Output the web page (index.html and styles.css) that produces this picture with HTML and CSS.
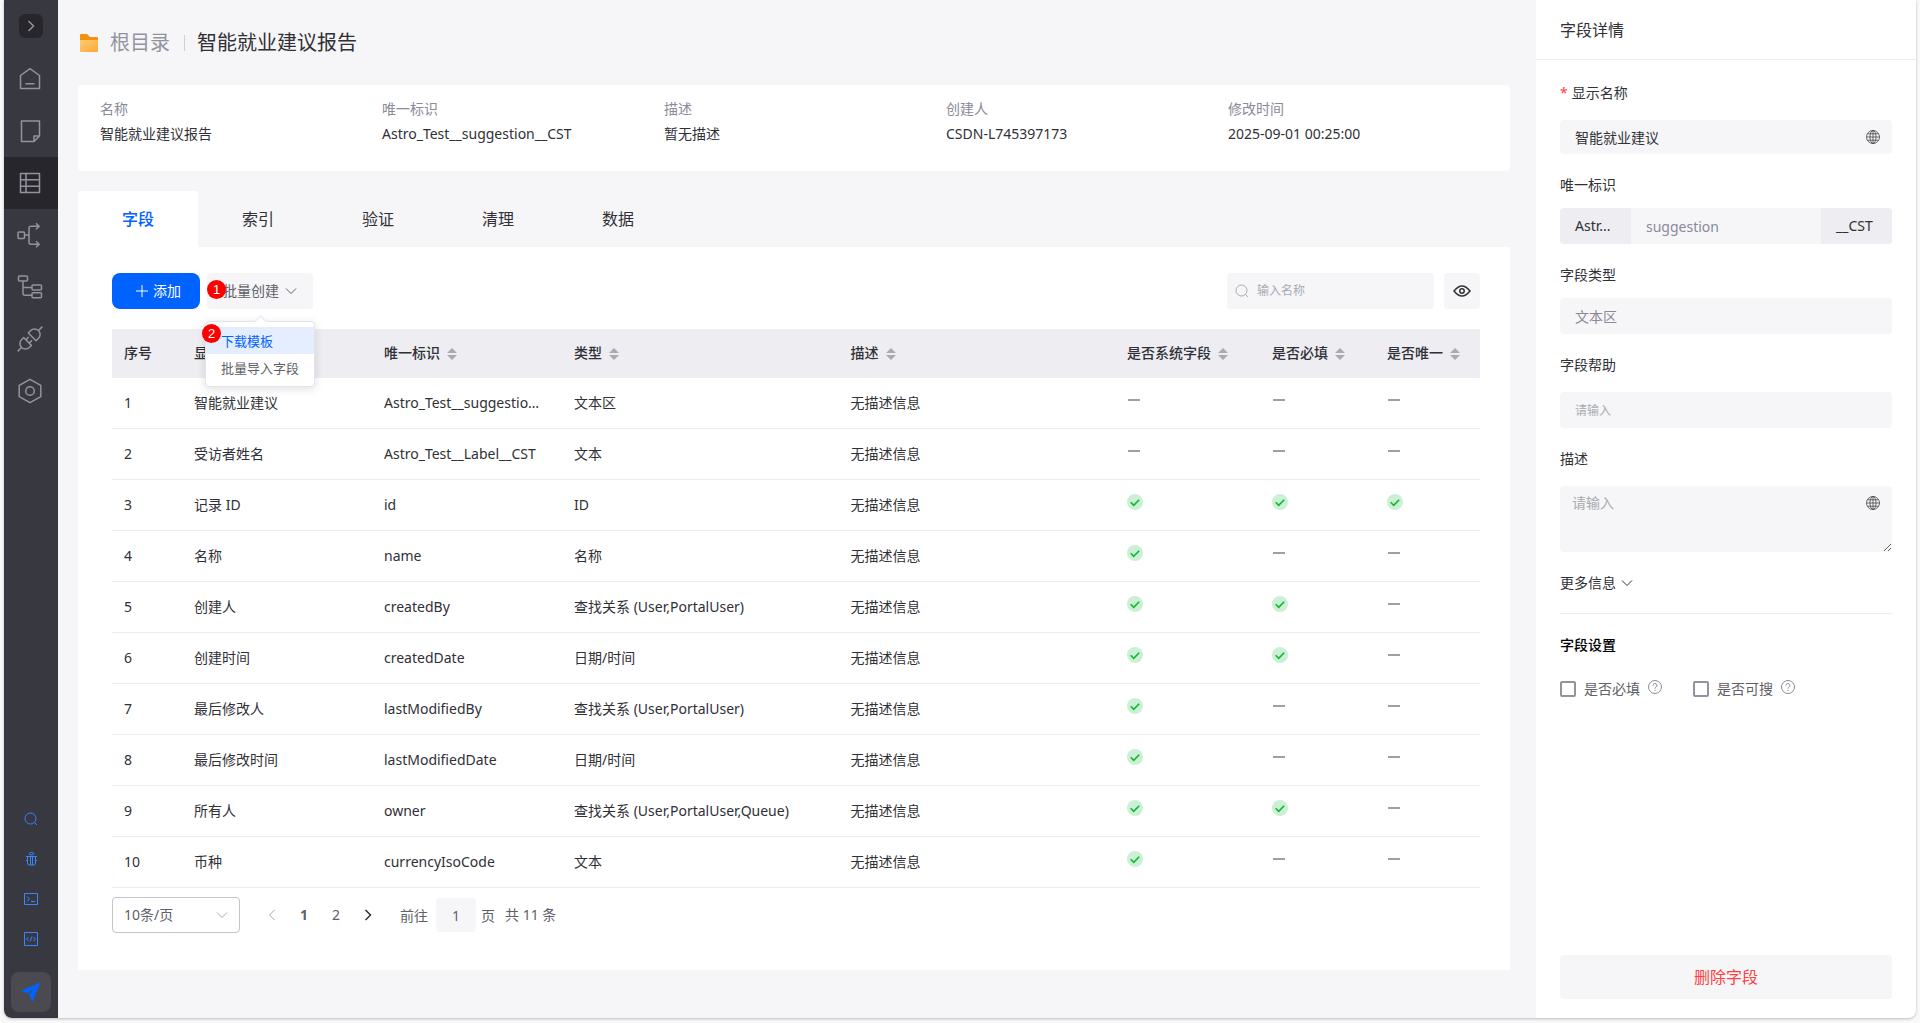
FILE: index.html
```
<!DOCTYPE html>
<html lang="zh-CN">
<head>
<meta charset="UTF-8" />
<meta name="viewport" content="width=device-width, initial-scale=1" />
<title>智能就业建议报告</title>
<link rel="stylesheet" href="styles.css">
</head>
<body>

<!-- Shared icons -->
<svg class="sprite" aria-hidden="true">
  <symbol id="chevron-down" viewBox="0 0 12 12"><path d="M1 3.5l5 5 5-5" /></symbol>
  <symbol id="chevron-left" viewBox="0 0 12 12"><path d="M8.5 1l-5 5 5 5" /></symbol>
  <symbol id="chevron-right" viewBox="0 0 12 12"><path d="M3.5 1l5 5-5 5" /></symbol>
  <symbol id="search" viewBox="0 0 14 14"><circle cx="6.5" cy="6.5" r="5.5" /><path d="M10.5 10.5l2.5 2.5" /></symbol>
  <symbol id="globe" viewBox="0 0 14 14">
    <circle cx="7" cy="7" r="6.5" /><ellipse cx="7" cy="7" rx="3" ry="6.5" />
    <path d="M7 .5v13M.5 7h13M1.5 3.8h11M1.5 10.2h11" />
  </symbol>
  <symbol id="help" viewBox="0 0 14 14">
    <circle cx="7" cy="7" r="6.5" />
    <path d="M5 5.6a2 2 0 1 1 3 1.6q-1 .6-1 1.4M7 9.8v1.2" />
  </symbol>
  <symbol id="check" viewBox="0 0 16 16"><circle cx="8" cy="8" r="8" fill="#cbf0d5" stroke="none" /><path d="M3.7 8.3l3 3 5.5-5.6" stroke="#0fb82e" stroke-width="1.6" /></symbol>
  <symbol id="sort" viewBox="0 0 10 12"><path d="M5 0l5 5H0zM5 12l5-5H0z" /></symbol>
</svg>

<div class="app">

  <aside class="sidebar">
    <button class="toggle" aria-label="展开"><svg class="icon" width="12" height="12"><use href="#chevron-right" /></svg></button>
    <nav class="side-nav">
      <a href="#home" aria-label="首页"><svg class="icon" width="26" height="26" viewBox="0 0 26 26"><path d="M3.5 9.5L13 2.7l9.5 6.8v13h-19zM8.5 17.7h9" /></svg></a>
      <a href="#page" aria-label="页面"><svg class="icon" width="26" height="26" viewBox="0 0 26 26"><path d="M4.5 3h18v15L17 23.5H4.5zM17 23.5V18h5.5" /></svg></a>
      <a href="#data" class="active" aria-label="数据"><svg class="icon" width="26" height="26" viewBox="0 0 26 26"><path d="M3.5 3.5h19v19h-19zM9 3.5v19M3.5 9.8h19M3.5 16.2h19" /></svg></a>
      <a href="#flow" aria-label="流程"><svg class="icon" width="26" height="26" viewBox="0 0 26 26"><rect x="1" y="10" width="6.5" height="6.5" rx="1" /><path d="M7.500 13H12M22 4.200h-8q-2 0-2 2v14q0 2 2 2h8M19 1.200l3.200 3-3.200 3M19 19.200l3.200 3-3.200 3" /></svg></a>
      <a href="#tree" aria-label="结构"><svg class="icon" width="26" height="26" viewBox="0 0 26 26"><rect x="1.500" y="2" width="9" height="5" rx="1" /><rect x="15" y="11" width="9.500" height="5" rx="1" /><rect x="15" y="18.700" width="9.500" height="5" rx="1" /><path d="M6 7v12.200q0 2 2 2h7M6 13.500h9" /></svg></a>
      <a href="#link" aria-label="连接"><svg class="icon" width="26" height="26" viewBox="0 0 26 26"><g transform="rotate(-45 13 13)"><path d="M-4.500 13H1M9.500 7.500H6.500a5.500 5.500 0 0 0 0 11h3zM9.500 10.700h4M9.500 15.300h4M16 7.500h3.500a5.500 5.500 0 0 1 0 11H16zM25 13h5.500" /></g></svg></a>
      <a href="#setting" aria-label="设置"><svg class="icon" width="26" height="26" viewBox="0 0 26 26"><path d="M13 1.300l10.800 6v11.400L13 24.700l-10.800-6V7.300z" /><circle cx="13" cy="13" r="4.300" /></svg></a>
    </nav>
    <div class="side-tools">
      <a href="#find" aria-label="搜索"><svg class="icon" width="14" height="14"><use href="#search" /></svg></a>
      <a href="#debug" aria-label="调试"><svg class="icon" width="14" height="14" viewBox="0 0 14 14"><ellipse cx="7.500" cy="1.700" rx="2.300" ry="1.200" /><path d="M2 4.500h11M3.500 4.500v6.500q0 2 2 2h4q2 0 2-2V4.500M6.500 4.500V13M8.500 4.500V13M2 8.500h1.500M11.500 8.500H13" /></svg></a>
      <a href="#console" aria-label="控制台"><svg class="icon" width="14" height="14" viewBox="0 0 14 14"><path d="M.5 1.500h13v11H.5zM3 4.500L5.500 7 3 9.500M7 9.500h4" /></svg></a>
      <a href="#code" aria-label="代码"><svg class="icon" width="14" height="14" viewBox="0 0 14 14"><path d="M.5.5h13v13H.5zM4.500 5l-2 2 2 2M9.500 5l2 2-2 2M8 4.500l-2 5" /></svg></a>
    </div>
    <button class="send" aria-label="发送"><svg width="20" height="20" viewBox="0 0 20 20"><path d="M19.500.5L.8 8.300q-.6.400 0 .8l6 2.500 6-5-4.700 6.500 2.800 6q.5.800 1 0z" fill="#0062ff" /></svg></button>
  </aside>

  <main class="main">
    <div class="breadcrumb">
      <svg width="18" height="18" viewBox="0 0 18 18">
        <defs><linearGradient id="folder" x1="0" y1="0" x2="1" y2="1"><stop offset="0" stop-color="#ffcb78" /><stop offset="1" stop-color="#fdaa33" /></linearGradient></defs>
        <path d="M1 0h6l3 3h7q1 0 1 1v4H0V1q0-1 1-1z" fill="#f5900c" />
        <path d="M0 6h18v11q0 1-1 1H1q-1 0-1-1z" fill="url(#folder)" />
      </svg>
      <a href="#root">根目录</a>
      <h1>智能就业建议报告</h1>
    </div>

    <dl class="info-card">
      <div><dt>名称</dt><dd>智能就业建议报告</dd></div>
      <div><dt>唯一标识</dt><dd>Astro_Test__suggestion__CST</dd></div>
      <div><dt>描述</dt><dd>暂无描述</dd></div>
      <div><dt>创建人</dt><dd>CSDN-L745397173</dd></div>
      <div><dt>修改时间</dt><dd>2025-09-01 00:25:00</dd></div>
    </dl>

    <div class="tabs">
      <button class="tab active">字段</button>
      <button class="tab">索引</button>
      <button class="tab">验证</button>
      <button class="tab">清理</button>
      <button class="tab">数据</button>
    </div>

    <section class="panel">
      <div class="toolbar">
        <button class="btn-add"><svg class="icon" width="12" height="12" viewBox="0 0 12 12"><path d="M6 0v12M0 6h12" /></svg>添加</button>
        <div class="batch">
          <button class="btn-batch">批量创建<svg class="icon" width="12" height="12"><use href="#chevron-down" /></svg></button>
          <span class="step step-one">1</span>
          <div class="dropdown">
            <button class="selected">下载模板</button>
            <button>批量导入字段</button>
            <span class="step step-two">2</span>
          </div>
        </div>
        <label class="search-box">
          <svg class="icon" width="14" height="14"><use href="#search" /></svg>
          <input type="text" placeholder="输入名称" aria-label="输入名称" />
        </label>
        <button class="btn-eye" aria-label="显示列"><svg class="icon" width="18" height="12" viewBox="0 0 18 12"><path d="M1 6q8-10 16 0-8 10-16 0z" /><circle cx="9" cy="6" r="2.200" /></svg></button>
      </div>

      <table class="field-table">
        <colgroup>
          <col class="col-no"><col class="col-name"><col class="col-name"><col><col>
          <col class="col-system"><col class="col-required"><col class="col-unique">
        </colgroup>
        <thead>
          <tr>
            <th>序号</th>
            <th>显示名称</th>
            <th>唯一标识<svg class="sort"><use href="#sort" /></svg></th>
            <th>类型<svg class="sort"><use href="#sort" /></svg></th>
            <th>描述<svg class="sort"><use href="#sort" /></svg></th>
            <th>是否系统字段<svg class="sort"><use href="#sort" /></svg></th>
            <th>是否必填<svg class="sort"><use href="#sort" /></svg></th>
            <th>是否唯一<svg class="sort"><use href="#sort" /></svg></th>
          </tr>
        </thead>
        <tbody id="field-rows">
          <!-- Rows are loaded below -->
        </tbody>
      </table>

      <div class="pagination">
        <div class="page-size">
          <select aria-label="每页条数"><option>10条/页</option><option>20条/页</option></select>
          <svg class="icon" width="12" height="12"><use href="#chevron-down" /></svg>
        </div>
        <button class="page prev" aria-label="上一页"><svg class="icon" width="12" height="12"><use href="#chevron-left" /></svg></button>
        <button class="page current">1</button>
        <button class="page">2</button>
        <button class="page next" aria-label="下一页"><svg class="icon" width="12" height="12"><use href="#chevron-right" /></svg></button>
        <label class="jump">前往<input type="text" value="1" />页</label>
        <span>共 11 条</span>
      </div>
    </section>
  </main>

  <aside class="detail">
    <h2>字段详情</h2>
    <form class="detail-form">
      <div class="form-item">
        <label for="label"><span class="star">*</span>显示名称</label>
        <div class="control">
          <input id="label" class="input-small" type="text" value="智能就业建议" />
          <svg class="icon globe" width="14" height="14"><use href="#globe" /></svg>
        </div>
      </div>
      <div class="form-item readonly">
        <label for="api-name">唯一标识</label>
        <div class="input-group">
          <span>Astr...</span>
          <input id="api-name" type="text" value="suggestion" readonly />
          <span>__CST</span>
        </div>
      </div>
      <div class="form-item readonly">
        <label for="type">字段类型</label>
        <input id="type" type="text" value="文本区" readonly />
      </div>
      <div class="form-item">
        <label for="help-text">字段帮助</label>
        <input id="help-text" class="input-help" type="text" placeholder="请输入" />
      </div>
      <div class="form-item">
        <label for="desc">描述</label>
        <div class="control">
          <textarea id="desc" placeholder="请输入"></textarea>
          <svg class="icon globe" width="14" height="14"><use href="#globe" /></svg>
        </div>
      </div>
      <button type="button" class="more">更多信息<svg class="icon" width="12" height="12"><use href="#chevron-down" /></svg></button>
      <h3>字段设置</h3>
      <div class="checks">
        <label><input type="checkbox" />是否必填<svg class="icon" width="14" height="14"><use href="#help" /></svg></label>
        <label><input type="checkbox" />是否可搜<svg class="icon" width="14" height="14"><use href="#help" /></svg></label>
      </div>
      <button type="button" class="btn-delete">删除字段</button>
    </form>
  </aside>

</div>

<script>
  // name, api name, type, system, required, unique
  const fields = [
    ['智能就业建议', 'Astro_Test__suggestion__CST', '文本区', 0, 0, 0],
    ['受访者姓名', 'Astro_Test__Label__CST', '文本', 0, 0, 0],
    ['记录 ID', 'id', 'ID', 1, 1, 1],
    ['名称', 'name', '名称', 1, 0, 0],
    ['创建人', 'createdBy', '查找关系 (User,PortalUser)', 1, 1, 0],
    ['创建时间', 'createdDate', '日期/时间', 1, 1, 0],
    ['最后修改人', 'lastModifiedBy', '查找关系 (User,PortalUser)', 1, 0, 0],
    ['最后修改时间', 'lastModifiedDate', '日期/时间', 1, 0, 0],
    ['所有人', 'owner', '查找关系 (User,PortalUser,Queue)', 1, 1, 0],
    ['币种', 'currencyIsoCode', '文本', 1, 0, 0]
  ];

  const mark = on => on
    ? '<svg class="check"><use href="#check" /></svg>'
    : '<span class="dash"></span>';

  document.getElementById('field-rows').innerHTML = fields.map((f, i) => `
    <tr>
      <td>${i + 1}</td>
      <td>${f[0]}</td>
      <td>${f[1]}</td>
      <td>${f[2]}</td>
      <td>无描述信息</td>
      <td class="mark">${mark(f[3])}</td>
      <td class="mark">${mark(f[4])}</td>
      <td class="mark">${mark(f[5])}</td>
    </tr>
  `).join('');
</script>

</body>
</html>
```
FILE: styles.css
```
/* Reset */
* {
  margin: 0; padding: 0; box-sizing: border-box;
}
body {
  font-family: 'Noto Sans', 'Noto Sans CJK SC', sans-serif;
  font-size: 14px;
  line-height: 20px;
  color: #303036;
  background: #f9f9f9;
  padding: 0 4px 5px;
}
button, input, select, textarea {
  font: inherit;
  color: inherit;
  border: none;
  outline: none;
  background: none;
}
button {
  cursor: pointer;
}
a {
  color: inherit;
  text-decoration: none;
}
.sprite {
  display: none;
}
.icon {
  fill: none;
  stroke: currentColor;
  flex-shrink: 0;
}
.app {
  display: flex;
  min-height: calc(100vh - 5px);
  background: #f6f6f8;
  border-radius: 0 0 8px 8px;
  box-shadow: 0 1px 3px rgba(0,0,0,0.25);
  overflow: hidden;
}

/* Sidebar */
.sidebar {
  width: 54px;
  flex-shrink: 0;
  display: flex;
  flex-direction: column;
  align-items: center;
  padding: 14px 0 6px;
  background: #383840;
  color: #93939f;
}
.toggle {
  width: 24px;
  height: 24px;
  border-radius: 6px;
  background: #26262c;
  display: flex;
  align-items: center;
  justify-content: center;
}
.toggle .icon {
  stroke-width: 1.5;
}
.side-nav {
  width: 100%;
  margin-top: 15px;
}
.side-nav a {
  height: 52px;
  padding-right: 2px;
  display: flex;
  align-items: center;
  justify-content: center;
}
.side-nav .active {
  background: #26262c;
}
.side-nav .icon {
  stroke-width: 1.5;
  stroke-linejoin: round;
  overflow: visible;
}
.side-tools {
  margin-top: auto;
  margin-bottom: 13px;
  color: #3a86ff;
}
.side-tools a {
  height: 40px;
  display: flex;
  align-items: center;
}
.send {
  width: 40px;
  height: 40px;
  border-radius: 8px;
  background: #4a4a50;
  display: flex;
  align-items: center;
  justify-content: center;
}

/* Main area */
.main {
  flex: 1;
  min-width: 0;
  padding: 28px 26px 48px 20px;
}
.breadcrumb {
  display: flex;
  align-items: center;
  padding-left: 2px;
  margin-bottom: 27px;
  font-size: 20px;
  line-height: 30px;
}
.breadcrumb a {
  margin-left: 12px;
  color: #93939f;
}
.breadcrumb h1 {
  font-size: 20px;
  font-weight: 400;
  display: flex;
  align-items: center;
}
.breadcrumb h1::before {
  content: "";
  height: 16px;
  margin: 0 12px 0 14px;
  border-left: 1px solid #d0d0d6;
}
.info-card {
  display: grid;
  grid-template-columns: repeat(5, 1fr);
  padding: 14px 0 27px 22px;
  background: white;
  border-radius: 4px;
}
.info-card dt {
  color: #8a8a99;
  margin-bottom: 5px;
}
.tabs {
  display: flex;
  margin-top: 20px;
}
.tab {
  width: 120px;
  height: 56px;
  font-size: 16px;
  border-radius: 4px 4px 0 0;
}
.tab.active {
  background: white;
  color: #0062ff;
  font-weight: 500;
}
.panel {
  background: white;
  padding: 26px 30px 37px 34px;
}

/* Toolbar */
.toolbar {
  display: flex;
  margin-bottom: 20px;
}
.toolbar button {
  display: flex;
  align-items: center;
  justify-content: center;
}
.btn-add {
  width: 88px;
  height: 36px;
  gap: 5px;
  padding-left: 5px;
  border-radius: 8px;
  background: #0062ff;
  color: white;
}
.batch {
  position: relative;
  margin-left: 7px;
}
.btn-batch {
  width: 106px;
  height: 36px;
  gap: 6px;
  border-radius: 4px;
  background: #f6f6f8;
  color: #606068;
}
.dropdown {
  position: absolute;
  top: 48px;
  left: -2px;
  width: 110px;
  padding: 5px 0;
  border: 1px solid #e4e5ec;
  border-radius: 4px;
  background: white;
  box-shadow: 0 2px 10px rgba(0,0,0,0.12);
  font-size: 13px;
  z-index: 5;
}
.dropdown::before {
  content: "";
  position: absolute;
  top: -5px;
  left: 50%;
  width: 8px;
  height: 8px;
  margin-left: -4px;
  background: white;
  border: 1px solid #e4e5ec;
  border-width: 1px 0 0 1px;
  transform: rotate(45deg);
}
.dropdown button {
  width: 100%;
  height: 27px;
  padding-left: 15px;
  justify-content: flex-start;
  color: #606068;
}
.dropdown .selected {
  background: #e4eeff;
  color: #0062ff;
}
.step {
  position: absolute;
  width: 19px;
  height: 19px;
  border-radius: 50%;
  background: #ff0000;
  color: white;
  font: 13px/19px 'Liberation Sans', sans-serif;
  text-align: center;
}
.step-one {
  top: 7px;
  left: 0;
}
.step-two {
  top: 2px;
  left: -4px;
}
.search-box {
  display: flex;
  align-items: center;
  gap: 8px;
  width: 207px;
  height: 36px;
  margin-left: auto;
  padding: 0 8px;
  border-radius: 4px;
  background: #f6f6f8;
  color: #a8abb2;
}
.search-box input {
  min-width: 0;
  flex: 1;
  font-size: 12px;
}
::placeholder {
  color: #a8abb2;
}
.btn-eye {
  width: 36px;
  height: 36px;
  margin-left: 10px;
  border-radius: 4px;
  background: #f6f6f8;
}
.btn-eye .icon {
  stroke-width: 1.5;
}

/* Field table */
.field-table {
  width: 100%;
  table-layout: fixed;
  border-collapse: separate;
  border-spacing: 0;
}
.col-no { width: 70px; }
.col-name { width: 190px; }
.col-system { width: 145px; }
.col-required { width: 115px; }
.col-unique { width: 105px; }
.field-table th {
  height: 49px;
  padding: 0 0 2px 12px;
  background: #ededf2;
  font-weight: 500;
  text-align: left;
  white-space: nowrap;
}
.field-table td {
  height: 51px;
  padding: 0 20px 0 12px;
  border-bottom: 1px solid #ebebf2;
  white-space: nowrap;
  overflow: hidden;
  text-overflow: ellipsis;
}
.sort {
  width: 10px;
  height: 12px;
  margin-left: 7px;
  vertical-align: -2px;
  fill: #a8abb2;
}
.field-table .mark {
  padding-bottom: 6px;
}
.check, .dash {
  display: block;
}
.check {
  width: 16px;
  height: 16px;
  fill: none;
}
.dash {
  width: 12px;
  height: 2px;
  margin-left: 1px;
  background: #a0a0a0;
}

/* Pagination */
.pagination {
  display: flex;
  align-items: center;
  margin-top: 9px;
  color: #606068;
}
.page-size {
  position: relative;
  margin-right: 16px;
}
.page-size select {
  display: block;
  appearance: none;
  width: 128px;
  height: 36px;
  padding-left: 11px;
  border: 1px solid #c4c4cc;
  border-radius: 4px;
}
.page-size .icon {
  position: absolute;
  top: 12px;
  right: 12px;
  color: #a8abb2;
  pointer-events: none;
}
.page {
  width: 32px;
  height: 32px;
  display: flex;
  align-items: center;
  justify-content: center;
}
.page.prev {
  color: #a8abb2;
}
.page.next {
  color: #303036;
}
.page.next .icon {
  stroke-width: 1.5;
}
.page.current {
  font-weight: 700;
}
.jump {
  margin: 0 10px 0 16px;
}
.jump input {
  width: 40px;
  height: 34px;
  margin: 0 5px 0 8px;
  border-radius: 4px;
  background: #f6f6f8;
  text-align: center;
}

/* Detail panel */
.detail {
  width: 380px;
  flex-shrink: 0;
  display: flex;
  flex-direction: column;
  background: white;
}
.detail h2 {
  height: 60px;
  padding-left: 24px;
  border-bottom: 1px solid #ededf0;
  font-size: 16px;
  font-weight: 400;
  line-height: 60px;
}
.detail-form {
  flex: 1;
  display: flex;
  flex-direction: column;
  padding: 23px 24px 19px;
}
.form-item {
  margin-bottom: 21px;
}
.form-item > label {
  display: block;
  margin-bottom: 17px;
}
.form-item.readonly > label {
  margin-bottom: 13px;
}
.star {
  margin-right: 4px;
  color: #ff4040;
}
.form-item input {
  display: block;
  width: 100%;
  height: 36px;
  padding: 0 15px;
  border-radius: 4px;
  background: #f6f6f8;
}
.form-item .input-small {
  height: 34px;
}
.form-item .input-help {
  font-size: 12px;
}
.form-item.readonly input {
  color: #8a8a99;
}
.control {
  position: relative;
}
.control .globe {
  position: absolute;
  top: 10px;
  right: 12px;
  stroke-width: 0.7;
}
.control textarea {
  display: block;
  width: 100%;
  height: 66px;
  padding: 7px 12px;
  border-radius: 4px;
  background: #f6f6f8;
  resize: vertical;
}
.input-group {
  display: flex;
  border-radius: 4px;
  overflow: hidden;
}
.input-group span {
  width: 71px;
  padding-left: 15px;
  background: #ededf2;
  line-height: 36px;
}
.form-item .input-group input {
  flex: 1;
  min-width: 0;
  border-radius: 0;
}
.more {
  display: flex;
  align-items: center;
  gap: 5px;
  padding-bottom: 20px;
  border-bottom: 1px solid #ededf0;
}
.detail h3 {
  margin: 21px 0 24px;
  font-size: 14px;
  font-weight: 500;
  color: black;
}
.checks {
  display: flex;
  gap: 31px;
  color: #606068;
}
.checks label {
  display: flex;
  align-items: center;
}
.checks input {
  appearance: none;
  width: 16px;
  height: 16px;
  margin-right: 8px;
  border: 2px solid #9292a0;
  border-radius: 2px;
}
.checks .icon {
  margin: 0 0 4px 8px;
  color: #8a8a99;
}
.btn-delete {
  height: 44px;
  margin-top: auto;
  border-radius: 4px;
  background: #f6f6f8;
  color: #ff4040;
  font-size: 16px;
}
```
